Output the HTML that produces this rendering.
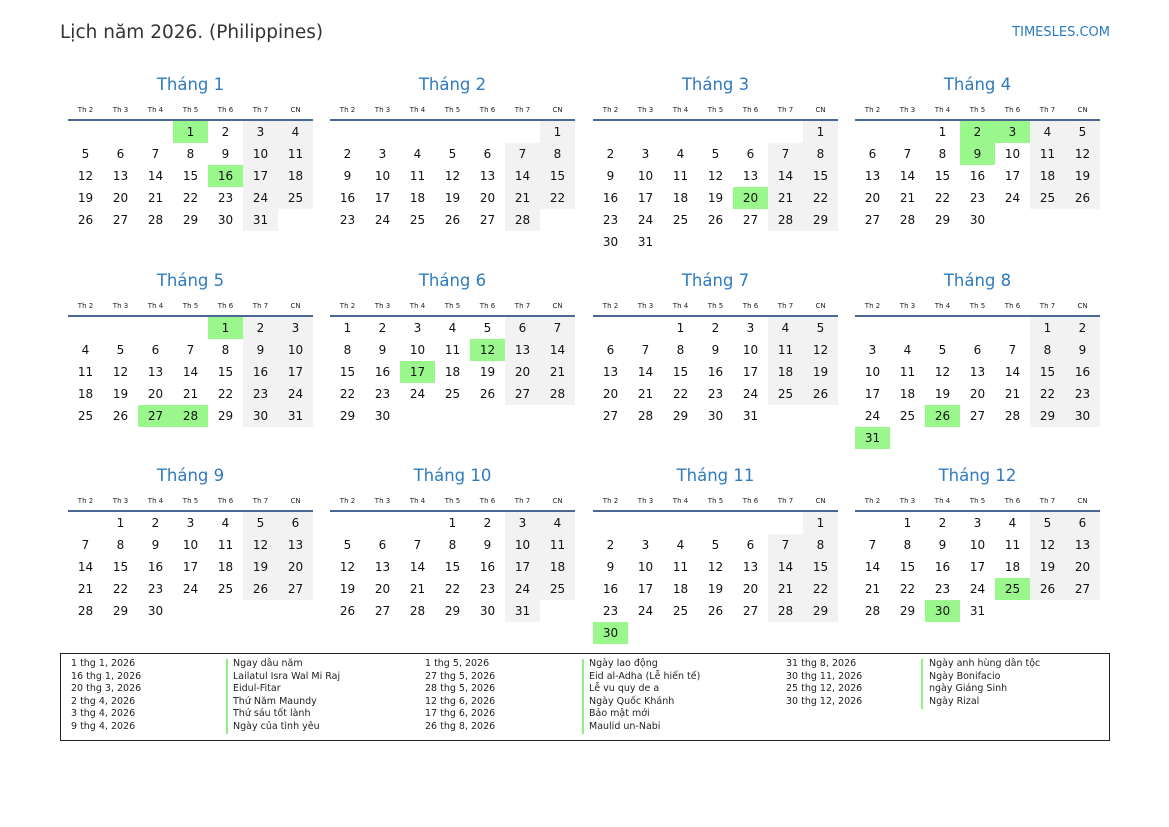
<!DOCTYPE html>
<html><head><meta charset="utf-8">
<style>
body{margin:0;width:1169px;height:827px;background:#fff;font-family:"DejaVu Sans","Liberation Sans",sans-serif;position:relative;overflow:hidden;color:#111}
.a{position:absolute}
.t{font-size:16.5px;color:#2f7bbf;text-align:center;width:245px}
.h{font-size:7px;width:35px;text-align:center;color:#222}
.c{width:35px;height:22px;line-height:22px;text-align:center;font-size:12px}
.g{background:#f2f2f2}.hl{background:#9af78b}
.ln{height:2px;width:245px;background:#4a6894}
.lg{font-size:9.5px;line-height:12.6px;color:#222;white-space:pre}
.bar{width:2px;background:#8fef84}
</style></head><body>
<div class="a" style="left:60px;top:22px;font-size:18.5px;color:#333">Lịch năm 2026. (Philippines)</div>
<div class="a" style="right:59px;top:25px;font-size:13px;color:#2a7bc0">TIMESLES.COM</div>
<div id="cal"></div>
<div class="a" style="left:60px;top:653px;width:1048px;height:86px;border:1px solid #222"></div>
<div class="a lg" style="left:71px;top:658px">1 thg 1, 2026
16 thg 1, 2026
20 thg 3, 2026
2 thg 4, 2026
3 thg 4, 2026
9 thg 4, 2026</div>
<div class="a bar" style="left:226px;top:659px;height:75px"></div>
<div class="a lg" style="left:233px;top:658px">Ngay dâu năm
Lailatul Isra Wal Mi Raj
Eidul-Fitar
Thứ Năm Maundy
Thứ sáu tốt lành
Ngày của tình yêu</div>
<div class="a lg" style="left:425px;top:658px">1 thg 5, 2026
27 thg 5, 2026
28 thg 5, 2026
12 thg 6, 2026
17 thg 6, 2026
26 thg 8, 2026</div>
<div class="a bar" style="left:582px;top:659px;height:75px"></div>
<div class="a lg" style="left:589px;top:658px">Ngày lao động
Eid al-Adha (Lễ hiến tế)
Lễ vu quy de a
Ngày Quốc Khánh
Bảo mật mới
Maulid un-Nabi</div>
<div class="a lg" style="left:786px;top:658px">31 thg 8, 2026
30 thg 11, 2026
25 thg 12, 2026
30 thg 12, 2026</div>
<div class="a bar" style="left:921px;top:659px;height:50px"></div>
<div class="a lg" style="left:929px;top:658px">Ngày anh hùng dân tộc
Ngày Bonifacio
ngày Giáng Sinh
Ngày Rizal</div>
<script>
var hol={0:[1,16],2:[20],3:[2,3,9],4:[1,27,28],5:[12,17],7:[26,31],10:[30],11:[25,30]};
var xs=[68,330,593,855],h="",dn=["Th 2","Th 3","Th 4","Th 5","Th 6","Th 7","CN"];
for(var m=0;m<12;m++){var x=xs[m%4],b=Math.floor(m/4),y0=b*195.5;
h+='<div class="a t" style="left:'+x+'px;top:'+(75+y0)+'px">Tháng '+(m+1)+'</div>';
for(var i=0;i<7;i++)h+='<div class="a h" style="left:'+(x+i*35)+'px;top:'+(106+y0)+'px">'+dn[i]+'</div>';
h+='<div class="a ln" style="left:'+x+'px;top:'+(119+y0)+'px"></div>';
var off=(new Date(2026,m,1).getDay()+6)%7,nd=new Date(2026,m+1,0).getDate();
for(var d=1;d<=nd;d++){var p=off+d-1,c=p%7,r=Math.floor(p/7);
var cl=(hol[m]&&hol[m].indexOf(d)>=0)?' hl':(c>=5?' g':'');
h+='<div class="a c'+cl+'" style="left:'+(x+c*35)+'px;top:'+(121+y0+r*22)+'px">'+d+'</div>';}}
document.getElementById('cal').innerHTML=h;
</script>
</body></html>
